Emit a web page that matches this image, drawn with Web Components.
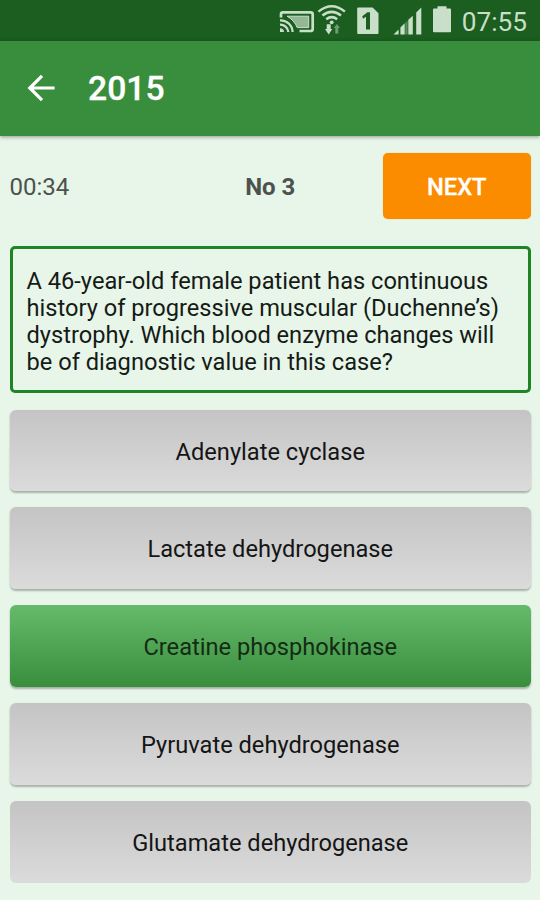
<!DOCTYPE html>
<html lang="en">
<head>
<meta charset="utf-8">
<title>2015</title>
<style>
html, body { margin: 0; height: 100%; }
body { background: #e8f5e9; font-family: Roboto, "Noto Sans", sans-serif; overflow: hidden; }
</style>
</head>
<body>
<quiz-screen></quiz-screen>
<script>
const define = (name, html) => customElements.define(name, class extends HTMLElement {
  constructor() {
    super();
    this.attachShadow({ mode: 'open' }).innerHTML = html;
  }
});

define('status-bar', `
<style>
:host { display: flex; justify-content: flex-end; height: 41px; background: #1b5e20; color: #c9dfca; box-sizing: border-box; padding-right: 13px; }
svg { width: 184px; height: 41px; flex: none; margin-right: 0; }
.clock { width: 66px; flex: none; text-align: right; font-size: 26.2px; line-height: 44px; white-space: nowrap; }
</style>
<svg viewBox="277 0 184 41" fill="#c9dfca" aria-hidden="true">
  <g fill="none" stroke="#c9dfca">
    <path d="M281 17.5V14.2Q281 12.3 283 12.3H310.500Q312.700 12.300 312.700 14.200V29Q312.700 31 310.500 31H299.500" stroke-width="2.700"/>
    <path d="M280 20.300A12 12 0 0 1 292.600 32M280 24.700A8 8 0 0 1 288.300 32" stroke-width="2.300"/>
    <path d="M287 16.200H308.700V27.600H297.200Q294.500 20.500 287 16.200Z" fill="#92b894" stroke="#c9dfca" stroke-width="1"/>
    <path d="M318.500 11.600Q331.700 0.900 344.900 11.600" stroke-width="2.500"/>
    <path d="M322.400 15.500Q331.700 8.200 341 15.500M326.200 19.200Q331.700 15 337.200 19.200" stroke-width="2.500"/>
  </g>
  <path d="M280 28.300A4 4 0 0 1 284 32H280Z"/>
  <circle cx="331.700" cy="22.300" r="1.900"/>
  <path d="M326.700 24.300H330.700V29H332.300L328.700 34.500L325 29H326.700Z"/>
  <path d="M335.300 33.500V28H333.700L336.900 24L340 28H338.300V33.500Z" fill="#6e9c71"/>
  <path d="M358.200 7.400H372.600L378.500 13.200V33Q378.500 34 377.500 34H358.200Q357.200 34 357.200 33V8.400Q357.200 7.400 358.200 7.400Z"/>
  <path d="M362.300 16.300L367.500 12.300H370V29.500H366V16.800L363 18.800Z" fill="#1b5e20"/>
  <path d="M393.500 34.400L398.600 29.500V34.400ZM400.400 27.500L404.700 23.300V34.400H400.400ZM408.300 19.800L412.800 15.700V34.400H408.300ZM416.200 12.500L421.300 7.500V34.400H416.200Z"/>
  <path d="M405.300 23V34.400H407.600V20.500Z" fill="#5c8f60"/>
  <path d="M434 8.500H437.500V6.300H446.500V8.500H450Q451 8.500 451 9.500V31.300Q451 32.300 450 32.300H434Q433 32.300 433 31.300V9.500Q433 8.500 434 8.500Z"/>
</svg>
<span class="clock">07:55</span>`);

define('app-bar', `
<style>
:host { display: flex; align-items: center; height: 94.500px; box-sizing: border-box; padding: 0 24px; background: #388e3c; color: #fff; box-shadow: 0 1px 4px rgba(0,0,0,.38); }
svg { width: 36px; height: 36px; margin-right: 28px; }
h1 { margin: 0; padding-top: 1px; font-size: 33.700px; font-weight: 500; line-height: 40px; -webkit-text-stroke: .3px; }
</style>
<svg viewBox="0 0 36 36" fill="none" stroke="#fff" stroke-width="3.200" aria-hidden="true"><path d="M30.600 18H6M18 5.800L5.800 18L18 30.200"/></svg>
<h1><slot></slot></h1>`);

define('quiz-toolbar', `
<style>
:host { display: grid; grid-template-columns: 1fr auto 1fr; align-items: center; height: 66.500px; color: #4c524d; font-size: 24px; line-height: 28px; }
.time, .no { padding-top: 2px; }
.no { font-weight: 700; }
.next { justify-self: end; }
</style>
<span class="time"><slot name="time"></slot></span><span class="no"><slot name="number"></slot></span><span class="next"><slot name="action"></slot></span>`);

define('action-button', `
<style>
:host { display: block; }
button { display: block; width: 148.500px; height: 66.500px; border: 0; border-radius: 5px; padding: 3px 0 0; background: #fb8c00; color: #fff; font: 500 23.700px/28px Roboto, sans-serif; -webkit-text-stroke: .3px; box-shadow: 0 0 1px rgba(251,140,0,.6); }
</style>
<button><slot></slot></button>`);

define('question-card', `
<style>
:host { display: block; box-sizing: border-box; height: 147px; border: 3px solid #1f8423; border-radius: 5px; padding: 19px 14px 0 14px; color: #151b16; font-size: 23.640px; line-height: 27px; white-space: nowrap; }
</style>
<slot></slot>`);

define('answer-option', `
<style>
:host { display: flex; align-items: center; justify-content: center; box-sizing: border-box; height: 81.800px; padding-top: 2px; border-radius: 6px; background: linear-gradient(#c4c4c4, #dbdbdb); color: #151515; font-size: 23.650px; line-height: 28px; box-shadow: 0 1.500px 2px rgba(0,0,0,.28); }
:host([correct]) { background: linear-gradient(#66bb6a, #388e3c); color: #142b16; }
:host([flat]) { box-shadow: none; }
</style>
<slot></slot>`);

define('quiz-screen', `
<style>
:host { display: block; height: 900px; background: #e8f5e9; }
main { padding: 17px 9px 0 9.500px; }
question-card { margin-top: 26.500px; }
.options { display: grid; gap: 16px; margin-top: 17.200px; }
</style>
<status-bar></status-bar>
<app-bar>2015</app-bar>
<main>
  <quiz-toolbar><span slot="time">00:34</span><span slot="number">No 3</span><action-button slot="action">NEXT</action-button></quiz-toolbar>
  <question-card>A 46-year-old female patient has continuous<br>history of progressive muscular (Duchenne’s)<br>dystrophy. Which blood enzyme changes will<br>be of diagnostic value in this case?</question-card>
  <div class="options">
    <answer-option>Adenylate cyclase</answer-option>
    <answer-option>Lactate dehydrogenase</answer-option>
    <answer-option correct>Creatine phosphokinase</answer-option>
    <answer-option>Pyruvate dehydrogenase</answer-option>
    <answer-option flat>Glutamate dehydrogenase</answer-option>
  </div>
</main>`);
</script>
</body>
</html>
